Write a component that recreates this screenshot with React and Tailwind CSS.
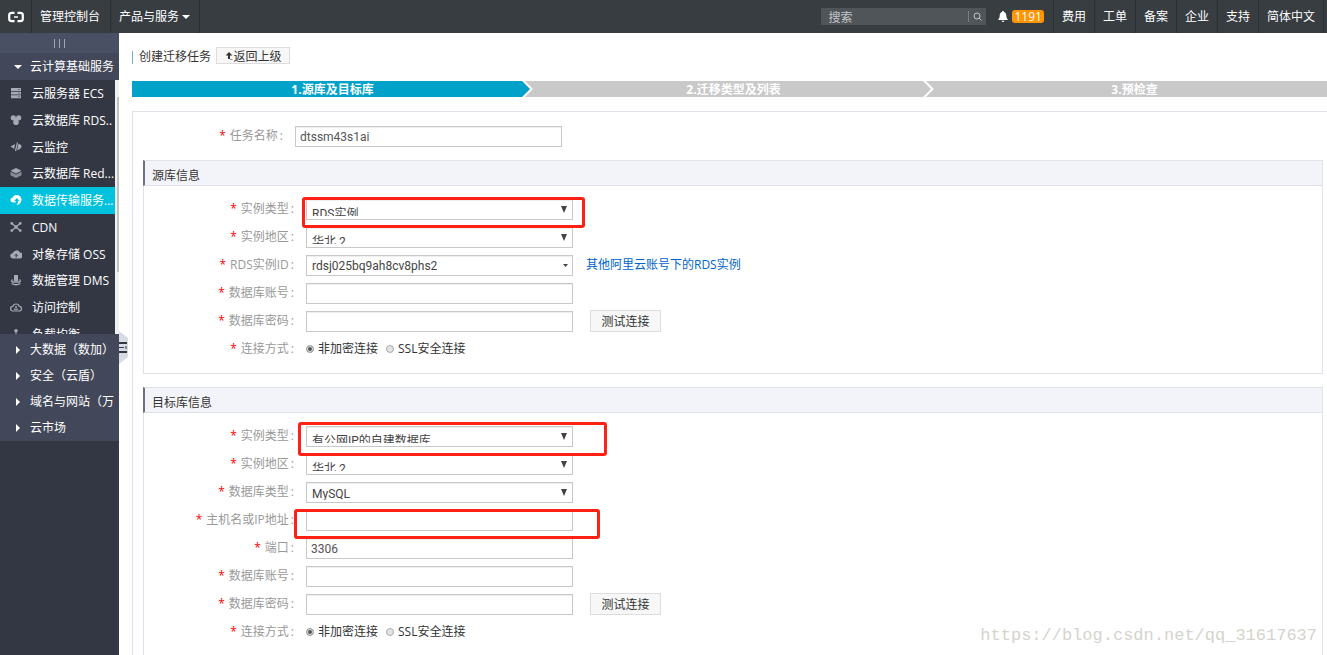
import React from "react";
import clsx from "clsx";

const FONT = "font-['Open_Sans','Noto_Sans_CJK_SC',sans-serif]";
const CONTROL_FONT = "font-['Roboto','Noto_Sans_CJK_SC',sans-serif]";

const navLinks = ["费用", "工单", "备案", "企业", "支持", "简体中文"];

const services = [
  { label: "云服务器 ECS", icon: "ecs" },
  { label: "云数据库 RDS..", icon: "rds" },
  { label: "云监控", icon: "monitor" },
  { label: "云数据库 Red...", icon: "redis" },
  { label: "数据传输服务...", icon: "dts", active: true },
  { label: "CDN", icon: "cdn" },
  { label: "对象存储 OSS", icon: "oss" },
  { label: "数据管理 DMS", icon: "dms" },
  { label: "访问控制", icon: "ram" },
  { label: "负载均衡", icon: "slb" },
];

const groups = ["大数据（数加）", "安全（云盾）", "域名与网站（万", "云市场"];

const steps = ["1.源库及目标库", "2.迁移类型及列表", "3.预检查"];

const iconShapes = {
  ecs: (
    <>
      <path d="M1 1h10v3H1zM1 4.7h10v2.8H1zM1 8.2h10v3H1z" fill="currentColor" />
      <path d="M8 2.500h2M8 6.100h2M8 9.700h2" stroke="#5b606e" strokeWidth=".8" />
    </>
  ),
  rds: (
    <>
      <circle cx="3.3" cy="3.8" r="2.6" fill="currentColor" />
      <circle cx="8.7" cy="3.8" r="2.6" fill="currentColor" />
      <circle cx="6" cy="8.2" r="2.8" fill="currentColor" />
      <circle cx="6" cy="5.2" r="1.5" fill="currentColor" />
    </>
  ),
  monitor: (
    <>
      <path d="M0.500 5.500 5 3l-.8 5z" fill="currentColor" />
      <path d="M7.500 1.500 5.500 10" stroke="currentColor" strokeWidth="1.200" />
      <path d="M8.300 3c2.200 0 3.200 1.300 3.200 2.500S10 8.300 7.200 9.500z" fill="currentColor" />
    </>
  ),
  redis: (
    <>
      <path d="M6 1 11.500 3.800 6 6.600 .5 3.800z" fill="currentColor" />
      <path d="M.5 4.800 6 7.600l5.500-2.800v3.400L6 11 .5 8.200z" fill="currentColor" opacity=".75" />
    </>
  ),
  dts: (
    <path
      d="M3.200 8.500C1.500 8.500.5 7.500.5 6c0-1.300 1-2.300 2.200-2.400C3.200 2 4.500 1 6.200 1c2.900 0 5.300 2 5.300 4.500 0 2.800-2.300 5.500-5 5.500 1.300-1.300 1.700-2.500 1.500-4H9.500L6.800 4 4.200 7h1.600c.1.600 0 1-.3 1.500z"
      fill="currentColor"
    />
  ),
  cdn: (
    <>
      <path d="m2 2.500 8 7M10 2.500l-8 7" stroke="currentColor" strokeWidth="1.300" />
      <circle cx="1.800" cy="2.400" r="1.400" fill="currentColor" />
      <circle cx="10.200" cy="2.400" r="1.400" fill="currentColor" />
      <circle cx="1.800" cy="9.600" r="1.400" fill="currentColor" />
      <circle cx="10.200" cy="9.600" r="1.400" fill="currentColor" />
      <circle cx="6" cy="6" r="1.800" fill="currentColor" />
    </>
  ),
  oss: (
    <>
      <path
        d="M3 10.500a2.600 2.600 0 0 1-.4-5.200A4 4 0 0 1 10 4.500a3 3 0 0 1-.6 6z"
        fill="currentColor"
      />
      <path d="M6.200 9.500V6.500M4.700 7.700l1.500-1.500 1.500 1.500" stroke="#333744" fill="none" />
    </>
  ),
  dms: (
    <>
      <path d="M4 1h4v6H4z" fill="currentColor" />
      <path
        d="M2.500 5.500Q1 7 2.500 8h7Q11 7 9.500 5.500M1.500 9.500Q6 12 10.500 9.500"
        stroke="currentColor"
        fill="none"
        strokeWidth="1.400"
      />
    </>
  ),
  ram: (
    <>
      <path
        d="M3 10a2.300 2.300 0 0 1-.2-4.600 3.400 3.400 0 0 1 6.500 0A2.300 2.300 0 0 1 9 10z"
        stroke="currentColor"
        fill="none"
        strokeWidth="1.200"
      />
      <path d="M4 8.200h4" stroke="currentColor" strokeWidth="1.200" />
      <circle cx="6" cy="6" r="1" fill="currentColor" />
    </>
  ),
  slb: (
    <>
      <circle cx="6" cy="2.800" r="1.800" fill="currentColor" />
      <path d="M6 4v3M2 9.500 6 6l4 3.500" stroke="currentColor" fill="none" strokeWidth="1.200" />
      <circle cx="2" cy="9.800" r="1.500" fill="currentColor" />
      <circle cx="10" cy="9.800" r="1.500" fill="currentColor" />
    </>
  ),
};

const ServiceIcon = ({ name }) => (
  <svg viewBox="0 0 12 12" className="w-3 h-3 shrink-0">
    {iconShapes[name]}
  </svg>
);

const Header = () => (
  <header className="flex h-[33px] shrink-0 items-stretch bg-[#373d41] text-white">
    <a href="#home" aria-label="首页" className="flex w-8 items-center justify-center border-r border-[#2a2f32]">
      <svg viewBox="0 0 16 12" className="h-3 w-4" fill="none" stroke="#fff" strokeWidth="2.200">
        <path d="M6.500 1.800H4Q1.200 1.800 1.200 4v4Q1.200 10.200 4 10.200h2.500M9.500 1.800H12q2.800 0 2.800 2.200v4q0 2.200-2.800 2.200H9.500" />
        <path d="M6 6h4" strokeWidth="1.500" />
      </svg>
    </a>
    <a href="#console" className="flex items-center border-r border-[#2a2f32] pt-px pr-[10px] pl-2">
      管理控制台
    </a>
    <button className="flex items-center gap-[3px] border-r border-[#2a2f32] pt-px pr-[9px] pl-2">
      产品与服务
      <svg viewBox="0 0 8 4" className="h-1 w-2">
        <path d="M0 0h8L4 4z" fill="#fff" />
      </svg>
    </button>

    <div className="ml-auto flex items-center">
      <div className="flex h-[17px] items-center bg-[#505559]">
        <input
          type="text"
          placeholder="搜索"
          aria-label="搜索"
          className="h-full w-[147px] bg-transparent pt-px pl-[7px] outline-none placeholder:text-[#c4c6c8]"
        />
        <button aria-label="提交搜索" className="flex h-[11px] w-[18px] items-center justify-center border-l border-[#7a7e81]">
          <svg viewBox="0 0 9 9" className="h-[9px] w-[9px]" fill="none" stroke="#c4c6c8">
            <circle cx="4" cy="4" r="3" />
            <path d="m6.200 6.200 2.300 2.300" />
          </svg>
        </button>
      </div>
      <button className="flex items-center gap-1 pr-[9px] pl-3">
        <svg viewBox="0 0 10 12" className="h-3 w-[10px]" fill="#fff">
          <path d="M5 0c.7 0 1 .4 1 1 1.700.5 2.300 2 2.300 3.600 0 2.200.7 3.200 1.700 4.400H0c1-1.200 1.700-2.200 1.700-4.400C1.700 3 2.300 1.500 4 1c0-.6.3-1 1-1zM3.700 9.800h2.600a1.300 1.300 0 0 1-2.600 0z" />
        </svg>
        <span className="flex h-[13px] items-center rounded-[3px] bg-[#ff9500] px-[2px]">1191</span>
      </button>
    </div>
    <nav className="mr-[3px] flex border-r border-[#2a2f32]">
      {navLinks.map((label) => (
        <a key={label} href="#nav" className="flex items-center border-l border-[#2a2f32] px-2 pt-px">
          {label}
        </a>
      ))}
    </nav>
  </header>
);

const Sidebar = () => (
  <aside className="relative w-[119px] shrink-0 bg-[#333744] text-white">
    <button aria-label="收起菜单" className="flex h-5 w-full items-center justify-center gap-1 bg-[#4a5064]">
      <span className="h-[9px] w-px bg-[#a0a6b8]" />
      <span className="h-[9px] w-px bg-[#a0a6b8]" />
      <span className="h-[9px] w-px bg-[#a0a6b8]" />
    </button>
    <button className="flex h-[27px] w-full items-center gap-2 bg-[#42475a] pt-px pl-[14px] whitespace-nowrap">
      <svg viewBox="0 0 8 4" className="h-1 w-2 shrink-0">
        <path d="M0 0h8L4 4z" fill="#fff" />
      </svg>
      云计算基础服务
    </button>

    <div className="flex h-[254px] overflow-hidden">
      <ul className="grid h-[267px] min-w-0 flex-1 auto-rows-fr">
        {services.map(({ label, icon, active }) => (
          <li key={icon} className={clsx("min-w-0", active && "bg-[#00c1de]")}>
            <a href="#service" className="flex h-full items-center gap-[10px] pl-[10px]">
              <span className={active ? "text-white" : "text-[#a3a9b5]"}>
                <ServiceIcon name={icon} />
              </span>
              <span className="pt-[2px] whitespace-nowrap">{label}</span>
            </a>
          </li>
        ))}
      </ul>
      {/* Scrollbar */}
      <div className="z-10 w-1 bg-[#f1f1f1] pt-[17px] pl-[2px]">
        <div className="h-[175px] bg-[#c1c1c1]" />
      </div>
    </div>

    <ul className="grid h-[107px] auto-rows-fr bg-[#42475a] pt-[2px]">
      {groups.map((label) => (
        <li key={label} className="min-w-0">
          <button className="flex h-full w-full items-center gap-[10px] pt-px pl-4 whitespace-nowrap">
            <svg viewBox="0 0 4 8" className="h-2 w-1 shrink-0">
              <path d="M0 0v8l4-4z" fill="#fff" />
            </svg>
            {label}
          </button>
        </li>
      ))}
    </ul>

    {/* Collapse handle on the sidebar's edge */}
    <button aria-label="展开" className="absolute top-[298px] left-full h-[33px] w-[9px]">
      <svg viewBox="0 0 9 33" className="h-full w-full">
        <path d="M0 0l9 7v19l-9 7z" fill="#d6dae3" />
        <path d="M0 12h8M0 21h8" stroke="#333744" strokeWidth="2" />
        <path d="M0 16.500h5M7 15v3" stroke="#333744" />
      </svg>
    </button>
  </aside>
);

const Steps = () => (
  <ol className="-mr-2 flex h-4 bg-[#c9c9c9] font-bold text-white">
    {steps.map((label, i) => (
      <li
        key={label}
        className={clsx("relative flex flex-1 items-center justify-center pt-[2px]", i === 0 && "bg-[#00a2ca]")}
      >
        {label}
        {i < 2 && (
          <svg viewBox="0 0 12 16" className="absolute top-0 right-0 h-4 w-3">
            <path d="M0 0h12v16H0z" fill="#c9c9c9" />
            {i === 0 && <path d="M0 0h2l8 8-8 8H0z" fill="#00a2ca" />}
            <path d="m2 -.5 8.500 8.500L2 16.500" fill="none" stroke="#fff" strokeWidth="2" />
          </svg>
        )}
      </li>
    ))}
  </ol>
);

const Row = ({ label, id, children }) => (
  <div className="flex h-7 items-center gap-3">
    <label htmlFor={id} className="flex w-[150px] shrink-0 justify-end text-[#999]">
      <span className="mr-1 text-[#f00]">*</span>
      {label}
      <span className="ml-[2px]">:</span>
    </label>
    <div className="relative flex items-center">{children}</div>
  </div>
);

const TextInput = ({ id, type = "text", value }) => (
  <input
    id={id}
    type={type}
    defaultValue={value}
    className={clsx(
      "h-[21px] w-[267px] border border-[#c8c8c8] bg-white px-1 pt-px text-[#555] shadow-[inset_0_1px_1px_rgba(0,0,0,0.07)] outline-none",
      CONTROL_FONT
    )}
  />
);

const selectPadding = {
  clipped: "pt-[6px] pb-[3px]",
  low: "pt-[3px] pb-[2px]",
  combo: "pt-px",
};

const Select = ({ id, value, variant = "clipped" }) => (
  <>
    <select
      id={id}
      className={clsx(
        "h-[21px] w-[267px] appearance-none border border-[#c8c8c8] bg-white pl-[5px] text-[#444] shadow-[inset_0_1px_1px_rgba(0,0,0,0.07)] outline-none",
        selectPadding[variant],
        CONTROL_FONT
      )}
    >
      <option>{value}</option>
    </select>
    {variant === "combo" ? (
      <svg viewBox="0 0 5 3" className="pointer-events-none absolute left-[257px] h-[3px] w-[5px]">
        <path d="M0 0h5L2.500 3z" fill="#444" />
      </svg>
    ) : (
      <svg viewBox="0 0 6 7" className="pointer-events-none absolute left-[255px] h-[7px] w-[6px]">
        <path d="M0 0h6L3 7z" fill="#444" />
      </svg>
    )}
  </>
);

const TestButton = () => (
  <button className="ml-[17px] h-[22px] w-[71px] border border-[#ddd] bg-[#f7f7f7] pt-px text-[#333]">测试连接</button>
);

const RadioOption = ({ name, label, checked }) => (
  <label className="flex items-center gap-1 text-[#333]">
    <input
      type="radio"
      name={name}
      defaultChecked={checked}
      className="h-2 w-2 appearance-none rounded-full border border-[#aaa] bg-[#e4e4e4] checked:bg-[#555] checked:shadow-[inset_0_0_0_1px_#e4e4e4]"
    />
    {label}
  </label>
);

const ConnectionMode = ({ name }) => (
  <Row label="连接方式">
    <div className="flex gap-2">
      <RadioOption name={name} label="非加密连接" checked />
      <RadioOption name={name} label="SSL安全连接" />
    </div>
  </Row>
);

const Highlight = ({ className }) => (
  <span className={clsx("pointer-events-none absolute z-10 rounded-[3px] border-3 border-[#ff2113]", className)} />
);

const Section = ({ title, children }) => (
  <section className="border border-t-0 border-[#dfe3e9]">
    <h2 className="-ml-px flex h-[26px] items-center border-y border-l-2 border-y-[#dfe3e9] border-l-[#6f6f84] bg-[#f3f4f9] pt-[6px] pl-[7px] text-[#333]">
      {title}
    </h2>
    <div className="pt-[9px] pb-[10px]">{children}</div>
  </section>
);

export default function App() {
  return (
    <div className={clsx("relative flex h-screen flex-col overflow-hidden bg-white text-[12px] leading-4", FONT)}>
      <Header />
      <div className="flex min-h-0 flex-1">
        <Sidebar />
        <main className="min-w-0 flex-1 overflow-hidden pl-[13px]">
          <div className="flex items-center gap-[5px] pt-[13px] pb-4">
            <h1 className="flex items-center gap-[6px] pt-[3px] text-[#333]">
              <span className="h-[13px] w-px bg-[#6fb0d8]" />
              创建迁移任务
            </h1>
            <button className="flex h-[17px] w-[74px] items-center justify-center gap-px border border-[#ddd] bg-[#f7f7f7] pt-[2px] text-[#333]">
              <svg viewBox="0 0 8 9" className="h-[9px] w-2">
                <path d="M4 0 .5 3.500H3V7h4.500V9H3V7.500H3V9h4.500V7.500H5V3.500h2.500z" fill="#333" />
              </svg>
              返回上级
            </button>
          </div>
          <Steps />

          <form className="mt-[14px] border-t border-l border-[#dfe3e9] pt-[10px]">
            <Row label="任务名称" id="task-name">
              <TextInput id="task-name" value="dtssm43s1ai" />
            </Row>

            <div className="mt-[10px] mr-1 ml-[10px] flex flex-col gap-[13px]">
              <Section title="源库信息">
                <Row label="实例类型" id="src-type">
                  <Select id="src-type" value="RDS实例" />
                  <Highlight className="-top-[2px] -left-1 h-[31px] w-[283px]" />
                </Row>
                <Row label="实例地区" id="src-region">
                  <Select id="src-region" value="华北 2" />
                </Row>
                <Row label="RDS实例ID" id="src-rds">
                  <Select id="src-rds" value="rdsj025bq9ah8cv8phs2" variant="combo" />
                  <a href="#other" className="ml-[13px] text-[#06c]">
                    其他阿里云账号下的RDS实例
                  </a>
                </Row>
                <Row label="数据库账号" id="src-user">
                  <TextInput id="src-user" />
                </Row>
                <Row label="数据库密码" id="src-pass">
                  <TextInput id="src-pass" type="password" />
                  <TestButton />
                </Row>
                <ConnectionMode name="src-mode" />
              </Section>

              <Section title="目标库信息">
                <Row label="实例类型" id="dst-type">
                  <Select id="dst-type" value="有公网IP的自建数据库" />
                  <Highlight className="-top-1 -left-2 h-[34px] w-[309px]" />
                </Row>
                <Row label="实例地区" id="dst-region">
                  <Select id="dst-region" value="华北 2" />
                </Row>
                <Row label="数据库类型" id="dst-engine">
                  <Select id="dst-engine" value="MySQL" variant="low" />
                </Row>
                <Row label="主机名或IP地址" id="dst-host">
                  <TextInput id="dst-host" />
                  <Highlight className="-top-px -left-3 h-[30px] w-[306px]" />
                </Row>
                <Row label="端口" id="dst-port">
                  <TextInput id="dst-port" value="3306" />
                </Row>
                <Row label="数据库账号" id="dst-user">
                  <TextInput id="dst-user" />
                </Row>
                <Row label="数据库密码" id="dst-pass">
                  <TextInput id="dst-pass" type="password" />
                  <TestButton />
                </Row>
                <ConnectionMode name="dst-mode" />
              </Section>
            </div>
          </form>
        </main>
      </div>
      <p className="pointer-events-none absolute right-[10px] bottom-[9px] font-['Liberation_Mono',monospace] text-[17px] leading-5 text-[#d4d4cd]">
        https://blog.csdn.net/qq_31617637
      </p>
    </div>
  );
}
